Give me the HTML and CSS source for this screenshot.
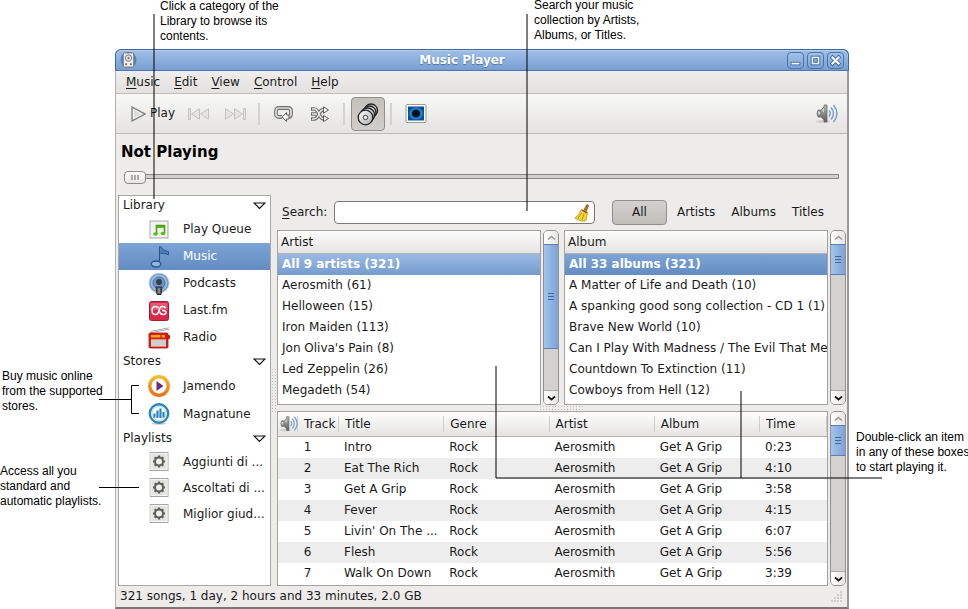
FILE: index.html
```html
<!DOCTYPE html>
<html lang="en">
<head>
<meta charset="utf-8">
<title>Music Player</title>
<link rel="stylesheet" href="styles.css">
</head>
<body>
<svg class="defs" width="0" height="0" aria-hidden="true">
  <defs>
    <linearGradient id="metal" x1="0" y1="0" x2="1" y2="1"><stop offset="0" stop-color="#fff"/><stop offset="1" stop-color="#aaa"/></linearGradient>
    <linearGradient id="cone" x1="0" y1="0" x2="0" y2="1"><stop offset="0" stop-color="#b4b6b1"/><stop offset="1" stop-color="#5b5d59"/></linearGradient>
    <linearGradient id="orange" x1="0" y1="0" x2="0" y2="1"><stop offset="0" stop-color="#f3bd2b"/><stop offset="1" stop-color="#e87417"/></linearGradient>
    <radialGradient id="burst"><stop offset="0" stop-color="#001a30"/><stop offset=".45" stop-color="#0b5ca5"/><stop offset=".7" stop-color="#2184d4"/><stop offset="1" stop-color="#064c8f"/></radialGradient>
    <symbol id="speaker" viewBox="0 0 24 22">
      <ellipse cx="8" cy="18.500" rx="7" ry="1.500" fill="#ccc"/>
      <path d="M3 7h3l3-3V2h3v17H9v-2l-3-3H3q-2-3.500 0-7z" fill="url(#cone)" stroke="#666864" stroke-width=".7"/>
      <path d="M3 8.500h2v3H3zM7 7l2-2v5z" fill="#d3d7cf"/>
      <path d="M14 7.500q2.500 3 0 6M16 4.500q5 6 0 12M18.500 2q7 8.500 0 17" fill="none" stroke="#7f9fcb" stroke-width="1.500"/>
    </symbol>
    <symbol id="gear" viewBox="0 0 20 20">
      <rect x=".5" y=".5" width="18" height="18" fill="#e3e3e2" stroke="#a5a5a4"/>
      <rect x="1.500" y="1.500" width="16" height="16" fill="none" stroke="#f7f7f7"/>
      <circle cx="9.500" cy="9.500" r="4" fill="#eee" stroke="#5d5f5b" stroke-width="2"/>
      <g stroke="#5d5f5b" stroke-width="2.200"><path d="M9.500 3.500v2M9.500 13.500v2M3.500 9.500h2M13.500 9.500h2M5.200 5.200l1.500 1.500M12.300 12.300l1.500 1.500M13.800 5.200l-1.500 1.500M6.700 12.300l-1.500 1.500"/></g>
    </symbol>
    <symbol id="open" viewBox="0 0 13 8"><path d="M1 1h11L6.500 6.500z" fill="#fff" stroke="#111" stroke-width="1.200"/></symbol>
    <symbol id="chev" viewBox="0 0 9 6"><path d="M1 1.500L4.500 4.500L8 1.500" fill="none" stroke="currentColor" stroke-width="1.800"/></symbol>
    <symbol id="prev" viewBox="0 0 22 12"><path d="M.5.500h2v11h-2zM11.500.8v10.400L3.500 6zM20.500.8v10.400L12.500 6z" fill="#e6e5e4" stroke="#c2c1bf"/></symbol>
  </defs>
</svg>

<main class="player">
  <header class="titlebar">
    <svg class="app-icon" viewBox="0 0 18 18"><circle cx="9" cy="9" r="8.500" fill="#5580bb"/><rect x="3.500" y="1.500" width="11" height="15" rx="1" fill="#eee" stroke="#777"/><circle cx="9" cy="7" r="3.400" fill="#ddd" stroke="#777"/><circle cx="9" cy="7" r="1" fill="#555"/><path d="M5.500 13.500h2M10.500 13.500h2" stroke="#777" stroke-width="2"/></svg>
    <h1>Music Player</h1>
    <div class="window-buttons">
      <button type="button" aria-label="Minimize"><svg viewBox="0 0 17 17"><rect x="3.500" y="10.500" width="10" height="3" fill="#fff" stroke="#3e6ca8"/></svg></button>
      <button type="button" aria-label="Maximize"><svg viewBox="0 0 17 17"><rect x="5" y="5" width="7" height="7" fill="none" stroke="#3e6ca8" stroke-width="4"/><rect x="5" y="5" width="7" height="7" fill="none" stroke="#e6effa" stroke-width="1.800"/></svg></button>
      <button type="button" aria-label="Close"><svg viewBox="0 0 17 17"><path d="M5 5l7 7M12 5l-7 7" stroke="#3e6ca8" stroke-width="4.500" stroke-linecap="square"/><path d="M5 5l7 7M12 5l-7 7" stroke="#fff" stroke-width="2.400" stroke-linecap="square"/></svg></button>
    </div>
  </header>

  <nav class="menubar">
    <button type="button"><u>M</u>usic</button><button type="button"><u>E</u>dit</button><button type="button"><u>V</u>iew</button><button type="button"><u>C</u>ontrol</button><button type="button"><u>H</u>elp</button>
  </nav>

  <div class="toolbar">
    <button type="button" class="play"><svg width="15" height="16" viewBox="0 0 15 16"><path d="M1 1v14l13-7z" fill="#dcdcda" stroke="#7a7c78" stroke-width="1.200"/><path d="M2.500 3.500v9L11 8z" fill="none" stroke="#f6f6f5"/></svg>Play</button>
    <button type="button" class="tool" aria-label="Previous"><svg width="22" height="12"><use href="#prev"/></svg></button>
    <button type="button" class="tool flip" aria-label="Next"><svg width="22" height="12"><use href="#prev"/></svg></button>
    <span class="sep"></span>
    <button type="button" class="tool" aria-label="Repeat"><svg width="20" height="16" viewBox="0 0 20 16"><path d="M8 11H5q-3 0-3-3V5q0-3 3-3h9q3 0 3 3v3q0 2.500-2 3" fill="none" stroke="#6f6f6d" stroke-width="3.800"/><path d="M8 11H5q-3 0-3-3V5q0-3 3-3h9q3 0 3 3v3q0 2.500-3 3h-2" fill="none" stroke="#dededc" stroke-width="1.700"/><path d="M12.500 6.500v2.500H15v4h-2.500v2.500L8 11z" fill="#f4f4f2" stroke="#5c5c5a"/></svg></button>
    <button type="button" class="tool" aria-label="Shuffle"><svg width="20" height="16" viewBox="0 0 20 16"><g fill="none" stroke="#6b6b69" stroke-width="3.600"><path d="M1 3h3q3 0 5 5t5 5M1 8h5M1 13h3q3 0 5-5t5-4"/></g><g fill="none" stroke="#eee" stroke-width="1.400"><path d="M2 3h2q3 0 5 5t5 5M2 8h4M2 13h2q3 0 5-5t5-4"/></g><path d="M13.500.8v6.400L18.500 4zM13.500 9.500v6L18.500 12.500z" fill="#f4f4f2" stroke="#5c5c5a"/></svg></button>
    <span class="sep"></span>
    <button type="button" class="tool browse" aria-label="Browse" aria-pressed="true"><svg width="22" height="24" viewBox="0 0 22 24"><g fill="url(#metal)" stroke="#222" stroke-width="1.300"><circle cx="14" cy="8.500" r="6.500"/><circle cx="12.500" cy="10.500" r="6.500"/><circle cx="10.500" cy="13" r="7"/><circle cx="8.500" cy="15.500" r="7.300"/></g><circle cx="8.500" cy="15.500" r="2.200" fill="#ddd" stroke="#444"/><circle cx="8.500" cy="15.500" r="1" fill="#fff"/></svg></button>
    <span class="sep"></span>
    <button type="button" class="tool" aria-label="Visualization"><svg width="22" height="20" viewBox="0 0 22 20"><rect x="1" y=".5" width="20" height="18" rx="1" fill="#fff" stroke="#999"/><rect x="3" y="2.500" width="16" height="14" fill="url(#burst)"/><circle cx="11" cy="9.500" r="3.800" fill="#020a12"/></svg></button>
    <button type="button" class="tool volume" aria-label="Volume"><svg width="24" height="22"><use href="#speaker"/></svg></button>
  </div>

  <h2 class="now">Not Playing</h2>
  <input class="seek" type="range" min="0" max="100" value="0" aria-label="Position">

  <div class="work">
    <aside class="sources">
      <h3>Library<svg width="13" height="8"><use href="#open"/></svg></h3>
      <ul>
        <li><svg viewBox="0 0 22 22"><rect x="2" y="2" width="18" height="17" fill="#f2f2f1" stroke="#a9a9a8"/><path d="M8.500 15V6.500h8V14" fill="none" stroke="#46a80c" stroke-width="1.600"/><path d="M8 7.500h9" stroke="#46a80c" stroke-width="2.500"/><ellipse cx="7.500" cy="15" rx="2.300" ry="1.700" fill="#55c20e"/><ellipse cx="15" cy="14.500" rx="2.300" ry="1.700" fill="#55c20e"/></svg><a href="#queue">Play Queue</a></li>
        <li class="on"><svg viewBox="0 0 22 22"><path d="M11.500 18V.8h1.500q1 3.500 7.500 5v3q-4-2-8-1.500" fill="#527fb9" stroke="#26548e"/><ellipse cx="8" cy="18" rx="4.800" ry="3" fill="#8fb4de" stroke="#2a5791" stroke-width="1.400"/></svg><a href="#music">Music</a></li>
        <li><svg viewBox="0 0 22 22"><circle cx="11" cy="10" r="10.500" fill="#c3d4ec"/><circle cx="11" cy="10" r="9" fill="#9cb8dd" stroke="#6f95c8" stroke-width="1.200"/><circle cx="11" cy="10" r="6" fill="#6d94c8" stroke="#4973ab" stroke-width="1"/><circle cx="11" cy="9" r="3" fill="#3b3e3e"/><path d="M8 14h6l-1 7.500H9z" fill="#555753" stroke="#2e3436"/><path d="M11 15v5" stroke="#bbb"/></svg><a href="#podcasts">Podcasts</a></li>
        <li><svg viewBox="0 0 22 22"><rect x="1.500" y="1.500" width="19" height="19" rx="2" fill="#d9294b" stroke="#a91835"/><path d="M2.500 3h17v7h-17z" fill="#e35a70"/><path d="M10.500 8q-1-1.500-3-1.500-3.500 0-3.500 4t3.500 4q2.500 0 3.500-4T14 6.500q3 0 3.500 1.500M14 10.500q4 0 4 2t-3 2q-2.500 0-3.500-3" fill="none" stroke="#fff" stroke-width="1.500"/></svg><a href="#lastfm">Last.fm</a></li>
        <li><svg viewBox="0 0 22 22"><path d="M3 5L21 1.500" stroke="#777" stroke-width="2.200"/><path d="M3 5L21 1.500" stroke="#eee" stroke-width="1"/><rect x="1" y="6" width="19" height="15" rx="1" fill="#d81e18" stroke="#a61512" stroke-width=".8"/><path d="M3 8h14v2.500H3z" fill="#f8a51b"/><path d="M13 8v3" stroke="#7b1b10"/><path d="M3 12.500h15v7H3z" fill="#f4f4f2"/><path d="M3 14h15M3 16h15M3 18h15" stroke="#a9a9a6"/><rect x="19" y="8" width="3" height="4" rx="1" fill="#c81712"/></svg><a href="#radio">Radio</a></li>
      </ul>
      <h3>Stores<svg width="13" height="8"><use href="#open"/></svg></h3>
      <ul class="stores">
        <li><svg viewBox="0 0 22 22"><circle cx="11" cy="11" r="9.200" fill="#fff" stroke="url(#orange)" stroke-width="3.400"/><path d="M8.500 6v10l7-5z" fill="#6b2c7d"/></svg><a href="#jamendo">Jamendo</a></li>
        <li><svg viewBox="0 0 22 22"><ellipse cx="11" cy="20.500" rx="7" ry="1.300" fill="#ccc"/><circle cx="11" cy="10.500" r="9.200" fill="#fff" stroke="#2b86b8" stroke-width="2.400"/><circle cx="11" cy="10.500" r="7" fill="#fff" stroke="#8cc4e2" stroke-width=".7"/><path d="M6.500 14.500v-4M9.500 15V7.500M12.500 15V5.500M15.500 14.500V9" stroke="#2b86b8" stroke-width="2.200"/></svg><a href="#magnatune">Magnatune</a></li>
      </ul>
      <h3>Playlists<svg width="13" height="8"><use href="#open"/></svg></h3>
      <ul class="lists">
        <li><svg viewBox="-1.500 -1 22 22"><use href="#gear" width="20" height="20"/></svg><a href="#p1">Aggiunti di ...</a></li>
        <li><svg viewBox="-1.500 -1 22 22"><use href="#gear" width="20" height="20"/></svg><a href="#p2">Ascoltati di ...</a></li>
        <li><svg viewBox="-1.500 -1 22 22"><use href="#gear" width="20" height="20"/></svg><a href="#p3">Miglior giud...</a></li>
      </ul>
    </aside>
    <div class="vgrip"><i></i></div>

    <section class="content">
      <form class="search">
        <label for="q"><u>S</u>earch:</label>
        <div class="field"><input id="q" type="text"><button type="button" aria-label="Clear"><svg width="16" height="18" viewBox="0 0 16 18"><path d="M9.500 7L12.500 1q1.500-1 2 .5L12 8" fill="#b5742d" stroke="#8a5014" stroke-width=".8"/><path d="M7.500 5.500l6 3-1.500 8q-1 1-2 .3l-1 .4q-4-.5-8-3 4-3 6.500-8.700z" fill="#f1d536" stroke="#b59108" stroke-width=".8"/><path d="M8 6l5 3" stroke="#b62d1b" stroke-width="1.200"/><path d="M8 9l-4 5M10 10l-2 6M4 14l1-1" stroke="#a98b06" stroke-width=".8"/></svg></button></div>
        <div class="scope"><button type="button" class="active">All</button><button type="button">Artists</button><button type="button">Albums</button><button type="button">Titles</button></div>
      </form>

      <div class="browsers">
        <div class="pane">
          <div class="frame"><table class="list light"><thead><tr><th>Artist</th></tr></thead><tbody>
            <tr class="sel"><td>All 9 artists (321)</td></tr><tr><td>Aerosmith (61)</td></tr><tr><td>Helloween (15)</td></tr><tr><td>Iron Maiden (113)</td></tr><tr><td>Jon Oliva's Pain (8)</td></tr><tr><td>Led Zeppelin (26)</td></tr><tr><td>Megadeth (54)</td></tr></tbody></table></div>
          <div class="bar"><button type="button" class="up" aria-label="Up"><svg width="9" height="6" viewBox="0 0 9 6"><path d="M1 4.500L4.500 1.500L8 4.500" fill="none" stroke="currentColor" stroke-width="1.500"/></svg></button><span class="thumb long"><i></i></span><span class="trough"></span><button type="button" aria-label="Down"><svg width="9" height="6"><use href="#chev"/></svg></button></div>
        </div>
        <div class="pane">
          <div class="frame"><table class="list"><thead><tr><th>Album</th></tr></thead><tbody>
            <tr class="sel"><td>All 33 albums (321)</td></tr><tr><td>A Matter of Life and Death (10)</td></tr><tr><td>A spanking good song collection - CD 1 (1)</td></tr><tr><td>Brave New World (10)</td></tr><tr><td>Can I Play With Madness / The Evil That Me</td></tr><tr><td>Countdown To Extinction (11)</td></tr><tr><td>Cowboys from Hell (12)</td></tr></tbody></table></div>
          <div class="bar"><button type="button" class="up" aria-label="Up"><svg width="9" height="6" viewBox="0 0 9 6"><path d="M1 4.500L4.500 1.500L8 4.500" fill="none" stroke="currentColor" stroke-width="1.500"/></svg></button><span class="thumb"><i></i></span><span class="trough"></span><button type="button" aria-label="Down"><svg width="9" height="6"><use href="#chev"/></svg></button></div>
        </div>
      </div>
      <div class="hgrip"><i></i></div>

      <div class="pane">
        <div class="frame">
        <table class="songs">
          <colgroup><col class="c-icon"><col class="c-no"><col><col><col><col><col class="c-time"></colgroup>
          <thead><tr><th><svg width="20" height="18" aria-label="Playing"><use href="#speaker"/></svg></th><th>Track</th><th>Title</th><th>Genre</th><th>Artist</th><th>Album</th><th>Time</th></tr></thead>
          <tbody>
            <tr><td></td><td>1</td><td>Intro</td><td>Rock</td><td>Aerosmith</td><td>Get A Grip</td><td>0:23</td></tr>
            <tr><td></td><td>2</td><td>Eat The Rich</td><td>Rock</td><td>Aerosmith</td><td>Get A Grip</td><td>4:10</td></tr>
            <tr><td></td><td>3</td><td>Get A Grip</td><td>Rock</td><td>Aerosmith</td><td>Get A Grip</td><td>3:58</td></tr>
            <tr><td></td><td>4</td><td>Fever</td><td>Rock</td><td>Aerosmith</td><td>Get A Grip</td><td>4:15</td></tr>
            <tr><td></td><td>5</td><td>Livin' On The ...</td><td>Rock</td><td>Aerosmith</td><td>Get A Grip</td><td>6:07</td></tr>
            <tr><td></td><td>6</td><td>Flesh</td><td>Rock</td><td>Aerosmith</td><td>Get A Grip</td><td>5:56</td></tr>
            <tr><td></td><td>7</td><td>Walk On Down</td><td>Rock</td><td>Aerosmith</td><td>Get A Grip</td><td>3:39</td></tr>
          </tbody>
        </table>
        </div>
        <div class="bar"><button type="button" class="up" aria-label="Up"><svg width="9" height="6" viewBox="0 0 9 6"><path d="M1 4.500L4.500 1.500L8 4.500" fill="none" stroke="currentColor" stroke-width="1.500"/></svg></button><span class="thumb"><i></i></span><span class="trough"></span><button type="button" aria-label="Down"><svg width="9" height="6"><use href="#chev"/></svg></button></div>
      </div>
    </section>
  </div>

  <footer class="status"><span>321 songs, 1 day, 2 hours and 33 minutes, 2.0 GB</span><svg width="12" height="12" viewBox="0 0 12 12"><path d="M9 1h2M6 4h5M3 7h8M0 10h11" stroke="#c5c3c0" stroke-width="1.500" stroke-dasharray="2 1"/></svg></footer>
</main>

<p class="note note-library">Click a category of the<br>Library to browse its<br>contents.</p>
<p class="note note-search">Search your music<br>collection by Artists,<br>Albums, or Titles.</p>
<p class="note note-stores">Buy music online<br>from the supported<br>stores.</p>
<p class="note note-playlists">Access all you<br>standard and<br>automatic playlists.</p>
<p class="note note-play">Double-click an item<br>in any of these boxes<br>to start playing it.</p>
<svg class="leaders" width="968" height="609" viewBox="0 0 968 609" aria-hidden="true">
  <path d="M154 14v185M527 14v197M496 366v112h386M741 391v87"/>
  <path d="M99 399.500h32M139 385.500h-7.500v28h7.500M99 487.500h40"/>
</svg>
</body>
</html>
```

FILE: styles.css
```css
* { box-sizing: border-box; }

body {
  position: relative;
  margin: 0;
  padding: 49px 119px 0 115px;
  background: #fff;
  color: #1a1a1a;
  font: 12px/21px "DejaVu Sans", sans-serif;
}

h1, h2, h3, p, ul { margin: 0; padding: 0; font-size: 12px; }
ul { list-style: none; }
a { color: inherit; text-decoration: none; }
svg { display: block; flex: none; }
button { margin: 0; padding: 0; border: 0; background: none; color: inherit; font: inherit; }
.defs { position: absolute; }

.player {
  display: flex;
  flex-direction: column;
  border: 1px solid #b3b1ae;
  border-top: 0;
  border-right: 2px solid #999;
  border-bottom: 2px solid #777;
  border-radius: 6px 6px 0 0;
  background: #edeceb;
}

.titlebar {
  display: flex;
  align-items: center;
  height: 22px;
  margin: 0 -2px 0 -1px;
  padding: 0 4px;
  border: 1px solid #41689c;
  border-bottom-color: #4a76b3;
  border-radius: 6px 6px 0 0;
  background: linear-gradient(#a0bfe8, #799fd1);
  box-shadow: inset 0 1px #b4cdec;
}
.titlebar h1 {
  flex: 1;
  color: #fff;
  font-weight: bold;
  text-align: center;
  text-shadow: 0 1px 1px #4a70a5;
}
.app-icon { width: 17px; height: 18px; }
.window-buttons { display: flex; gap: 3px; }
.window-buttons button {
  width: 17px;
  height: 17px;
  border: 1px solid #4873ab;
  border-radius: 4px;
  background: linear-gradient(#a5c2e8, #7da2d2);
}

.menubar {
  display: flex;
  gap: 14px;
  height: 23px;
  padding: 1px 10px 0;
  border-bottom: 1px solid #bfbdba;
  background: linear-gradient(#efeeed, #e2e1df);
}
u { text-underline-offset: 2px; }

.toolbar {
  display: flex;
  align-items: center;
  height: 40px;
  padding: 0 8px 0 15px;
  border-bottom: 1px solid #bcbab7;
  background: linear-gradient(#f8f8f7, #e4e3e1);
}
.play { display: flex; align-items: center; gap: 4px; margin-right: 6px; }
.tool { display: grid; place-items: center; width: 36px; height: 34px; }
.tool.flip svg { transform: scaleX(-1); }
.sep { width: 2px; height: 22px; margin: 0 6px 0 5px; background: #d5d3d1; }
.browse { width: 34px; border: 1px solid #918e8b; border-radius: 4px; background: linear-gradient(#c4c1bd, #d0cdca); }
.volume { margin-left: auto; width: 24px; }

.now { padding: 8px 5px 0; font-size: 15px; line-height: 21px; color: #000; }

.seek {
  appearance: none;
  height: 14px;
  margin: 7px 8px 11px;
  background: linear-gradient(#888, #888) 0 4px / 100% 1px no-repeat, linear-gradient(#888, #888) 0 8px / 100% 1px no-repeat, linear-gradient(#888, #888) 100% 4px / 1px 5px no-repeat, linear-gradient(#d0cfcd, #d0cfcd) 0 5px / 100% 3px no-repeat;
}
.seek::-webkit-slider-thumb {
  appearance: none;
  width: 22px;
  height: 13px;
  border: 1px solid #8e8c89;
  border-radius: 4px;
  background: repeating-linear-gradient(90deg, #aaa 0 2px, #f4f4f3 2px 3px) center / 8px 5px no-repeat, linear-gradient(#fff, #e6e5e3);
}

.work { display: flex; padding-right: 1px; }

.sources {
  flex: none;
  width: 153px;
  margin-left: 2px;
  background: #fff;
  box-shadow: inset 0 0 0 1px #aaa7a4;
}
.sources h3 {
  display: flex;
  align-items: center;
  justify-content: space-between;
  height: 21px;
  padding: 0 5px;
  font-weight: normal;
}
.sources li { display: flex; align-items: center; height: 27px; margin: 0 1px; padding: 0 4px 0 29px; gap: 13px; }
.sources .stores li { height: 28px; }
.sources .lists li { height: 26px; }
.sources li svg { width: 22px; height: 22px; }
.sources li a { flex: 1; min-width: 0; white-space: nowrap; }
.sources .on { background: linear-gradient(#7ea4d6, #628cc2); color: #fff; }

.vgrip { flex: none; display: flex; align-items: center; width: 6px; }
.vgrip i { width: 6px; height: 46px; background: radial-gradient(circle, #bbb 0 1px, transparent 1px) 0 0 / 3px 3px; }

.content { flex: 1; min-width: 0; display: flex; flex-direction: column; }

.search { display: flex; align-items: center; height: 35px; padding: 0 22px 0 5px; }
.search label { margin-right: 7px; }
.field {
  flex: 1;
  display: flex;
  align-items: center;
  height: 23px;
  padding: 0 4px;
  border: 1px solid #7b7976;
  border-radius: 4px;
  background: #fff;
}
.field input { flex: 1; min-width: 0; padding: 0; border: 0; outline: 0; background: none; font: inherit; }
.scope { display: flex; align-items: center; gap: 16px; margin-left: 17px; }
.scope .active {
  width: 55px;
  height: 25px;
  margin-right: -6px;
  border: 1px solid #918e8b;
  border-radius: 4px;
  background: linear-gradient(#d3d1ce, #c1beba);
}

.browsers { display: flex; gap: 5px; }
.pane { flex: 1 1 0; min-width: 0; display: flex; gap: 2px; }
.frame { flex: 1; min-width: 0; height: 175px; border: 1px solid #a5a29f; background: #fff; }
table { width: 100%; table-layout: fixed; border-collapse: separate; border-spacing: 0; }
th, td { height: 21px; padding: 0 5px; overflow: hidden; text-align: left; white-space: nowrap; font-weight: normal; }
th { height: 23px; border-bottom: 1px solid #b5b2af; background: linear-gradient(#fdfdfd, #e5e4e2); }
.list th { padding: 0 3px; }
.list td { padding: 0 4px; }
.sel td { background: linear-gradient(#7ea4d6, #628cc2); color: #fff; font-weight: bold; }
.light .sel td { background: linear-gradient(#9bbae4, #759ccf); }

.bar {
  flex: none;
  display: flex;
  flex-direction: column;
  width: 16px;
  border: 1px solid #92908d;
  border-radius: 5px;
  overflow: hidden;
  background: #d4d2d0;
}
.bar button { display: grid; place-items: center; height: 13px; background: linear-gradient(90deg, #fff, #e5e4e2); }
.bar .up { color: #999; border-bottom: 0; }
.bar button:last-child { border-top: 1px solid #aaa; height: 14px; }
.thumb { display: grid; place-items: center; height: 31px; border: solid #5a80b3; border-width: 1px 0; background: linear-gradient(90deg, #a5c3ec, #7ca2d7); }
.thumb i { width: 6px; height: 7px; background: repeating-linear-gradient(#3f689f 0 1px, transparent 1px 3px); }
.long { height: 105px; }
.trough { flex: 1; }

.hgrip { display: grid; place-items: center; height: 6px; }
.hgrip i { width: 46px; height: 6px; background: radial-gradient(circle, #bbb 0 1px, transparent 1px) 0 0 / 3px 3px; }

.c-icon { width: 20px; }
.c-no { width: 41px; }
.c-time { width: 67px; }
.songs th { height: 25px; padding: 0 5px 0 6px; background: linear-gradient(#ccc, #ccc) right 4px / 1px 16px no-repeat, linear-gradient(#fdfdfd, #e5e4e2); }
.songs th:first-child { padding: 0 1px; }
.songs th:nth-child(2) { padding-right: 0; }
.songs td:nth-child(2) { padding-right: 22px; padding-left: 0; text-align: center; }
.songs tbody tr:nth-child(even) { background: #ededed; }

.status {
  display: flex;
  justify-content: space-between;
  align-items: center;
  height: 21px;
  padding: 0 4px;
}

.note { position: absolute; color: #000; font: 12px/15px "Liberation Sans", sans-serif; white-space: nowrap; }
.note-library { left: 160px; top: -1px; }
.note-search { left: 534px; top: -2px; }
.note-stores { left: 2px; top: 369px; }
.note-playlists { left: 0; top: 464px; }
.note-play { left: 856px; top: 430px; }
.leaders { position: absolute; left: 0; top: 0; fill: none; stroke: #000; pointer-events: none; }
```
